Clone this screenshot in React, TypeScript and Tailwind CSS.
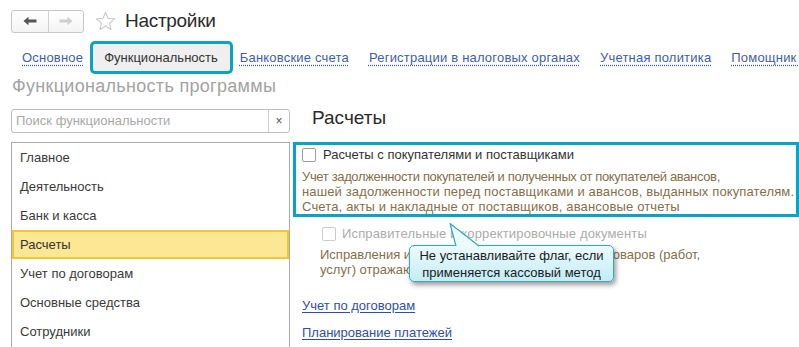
import React from "react";

const tabs = [
  "Основное",
  "Функциональность",
  "Банковские счета",
  "Регистрации в налоговых органах",
  "Учетная политика",
  "Помощник перехода",
];

const items = [
  "Главное",
  "Деятельность",
  "Банк и касса",
  "Расчеты",
  "Учет по договорам",
  "Основные средства",
  "Сотрудники",
  "Зарплата",
];

export default function App() {
  return (
    <div className="relative w-[799px] h-[347px] overflow-hidden bg-white font-['Liberation_Sans',Arial,sans-serif] text-[13px] text-[#333]">
      {/* Header */}
      <div className="flex items-center pl-[11px] pt-[9px]">
        <div className="flex h-[23px] w-[73px] rounded-[3px] border border-[#c6c6c6] bg-gradient-to-b from-white to-[#f4f4f4]">
          <div className="flex w-[37px] items-center justify-center border-r border-[#d0d0d0]">
            <svg width="14" height="10" viewBox="0 0 14 10">
              <path d="M0.5 5 L5.5 0.8 L5.5 3.6 L13.5 3.6 L13.5 6.4 L5.5 6.4 L5.5 9.2 Z" fill="#555" />
            </svg>
          </div>
          <div className="flex flex-1 items-center justify-center">
            <svg width="14" height="10" viewBox="0 0 14 10">
              <path d="M13.5 5 L8.5 0.8 L8.5 3.6 L0.5 3.6 L0.5 6.4 L8.5 6.4 L8.5 9.2 Z" fill="#cfcfcf" />
            </svg>
          </div>
        </div>
        <svg className="ml-[11px]" width="21" height="20" viewBox="0 0 24 23">
          <path
            d="M12 1.5 L14.9 8.4 L22.4 9 L16.7 13.9 L18.4 21.2 L12 17.3 L5.6 21.2 L7.3 13.9 L1.6 9 L9.1 8.4 Z"
            fill="none"
            stroke="#c9c9c9"
            strokeWidth="1.2"
            strokeLinejoin="round"
          />
        </svg>
        <div className="ml-[9px] text-[19px] leading-[24px] tracking-[-0.3px] text-[#2b2b2b]">Настройки</div>
      </div>

      {/* Tabs */}
      <div className="mt-[11px] flex pl-[12px] whitespace-nowrap">
        {tabs.map((t, i) =>
          i === 1 ? (
            <div
              key={t}
              className="flex h-[27px] items-center rounded-[2px] bg-[#efefef] pl-[11px] pr-[12px] text-[#333] ring-[3px] ring-[#0ba3c3]"
            >
              {t}
            </div>
          ) : (
            <div key={t} className="flex h-[27px] items-center px-[10px] tracking-[0.2px]">
              <span className="text-[#3f5db0] underline decoration-dotted decoration-[#3f5db0] underline-offset-[3px]">
                {t}
              </span>
            </div>
          )
        )}
      </div>

      {/* Section heading */}
      <div className="mt-[4px] pl-[12px] text-[18px] leading-[22px] tracking-[0.3px] text-[#a3a3a3]">
        Функциональность программы
      </div>

      <div className="flex">
        {/* Left column */}
        <div className="ml-[11px] w-[279px] shrink-0">
          <div className="mt-[12px] flex h-[24px] rounded-[3px] border border-[#bdbdbd]">
            <div className="flex flex-1 items-center pl-[4px] text-[#a8a8a8]">Поиск функциональности</div>
            <div className="flex w-[21px] items-center justify-center border-l border-[#cfcfcf] text-[12px] text-[#555]">
              ×
            </div>
          </div>
          <div className="mt-[9px] h-[260px] border border-[#a9a9a9]">
            {items.map((it) =>
              it === "Расчеты" ? (
                <div
                  key={it}
                  className="flex h-[29px] items-center border-2 border-[#f3c530] bg-[#fce794] pl-[6px] text-[#333]"
                >
                  {it}
                </div>
              ) : (
                <div key={it} className="flex h-[29px] items-center pl-[8px] text-[#3a3a3a]">
                  {it}
                </div>
              )
            )}
          </div>
        </div>

        {/* Right column */}
        <div className="ml-[3px] flex-1 min-w-0">
          <div className="mt-[9px] pl-[19px] text-[19px] leading-[24px] text-[#2b2b2b]">Расчеты</div>

          <div className="mt-[12px] h-[75px] overflow-hidden border-[3px] border-[#0ba3c3]">
            <div className="mt-[1px] flex h-[18px] items-center pl-[6px]">
              <div className="h-[14px] w-[14px] rounded-[2px] border border-[#9c9c9c] bg-white" />
              <span className="ml-[7px]">Расчеты с покупателями и поставщиками</span>
            </div>
            <div className="mt-[5px] pl-[6px] leading-[15px] whitespace-nowrap text-[#84704a]">
              <div className="tracking-[-0.35px]">Учет задолженности покупателей и полученных от покупателей авансов,</div>
              <div className="tracking-[0.13px]">нашей задолженности перед поставщиками и авансов, выданных покупателям.</div>
              <div className="tracking-[0.15px]">Счета, акты и накладные от поставщиков, авансовые отчеты</div>
            </div>
          </div>

          <div className="mt-[8px] flex h-[18px] items-center pl-[29px]">
            <div className="h-[14px] w-[14px] rounded-[2px] border border-[#cbcbcb] bg-white" />
            <span className="ml-[6px] tracking-[0.15px] text-[#ababab]">Исправительные и корректировочные документы</span>
          </div>
          <div className="mt-[4px] pl-[27px] leading-[15px] whitespace-nowrap text-[#84704a]">
            <div>Исправления и корректировки при реализации товаров (работ,</div>
            <div>услуг) отражаются в специальных документах</div>
          </div>

          <div className="mt-[21px] pl-[9px] leading-[15px]">
            <span className="text-[#2f4fa6] underline decoration-[#2f4fa6] underline-offset-[2px]">Учет по договорам</span>
          </div>
          <div className="mt-[12px] pl-[9px] leading-[15px]">
            <span className="text-[#2f4fa6] underline decoration-[#2f4fa6] underline-offset-[2px]">Планирование платежей</span>
          </div>
        </div>
      </div>

      {/* Tooltip */}
      <div className="absolute left-[409px] top-[245px] h-[37px] w-[205px] rounded-[5px] border border-[#33a8c3] bg-gradient-to-b from-[#ecfbfe] to-[#c4ecf5] pt-[1px] text-center leading-[17px] text-[#1a1a1a] shadow-[2px_3px_5px_rgba(0,0,0,0.4)]">
        <div>Не устанавливайте флаг, если</div>
        <div>применяется кассовый метод</div>
      </div>
      <svg className="absolute left-[445px] top-[220px]" width="40" height="28" viewBox="0 0 40 28">
        <polygon points="5,3.5 11,26.5 34,26.5" fill="#ecfbfe" />
        <polyline points="11,26 5,3.5 34,26" fill="none" stroke="#33a8c3" strokeWidth="1.2" strokeLinejoin="round" />
      </svg>
    </div>
  );
}
